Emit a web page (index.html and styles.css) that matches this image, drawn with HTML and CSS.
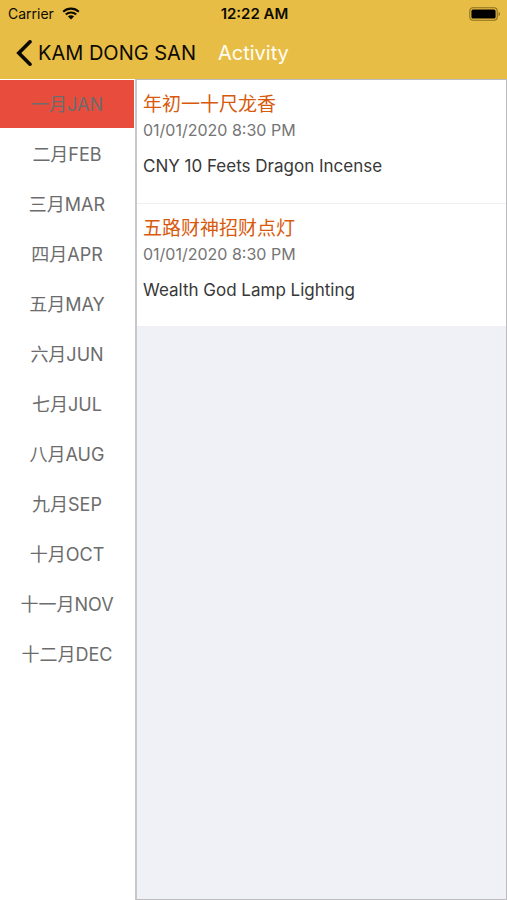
FILE: index.html
```html
<!DOCTYPE html>
<html lang="zh-Hans">
<head>
<meta charset="utf-8">
<meta name="viewport" content="width=device-width, initial-scale=1">
<title>Activity</title>
<link rel="stylesheet" href="styles.css">
</head>
<body>
<header class="top">
  <div class="status">
    <div class="carrier">
      <span>Carrier</span>
      <svg class="wifi" viewBox="0 0 18 13" aria-hidden="true">
        <path d="M1.2 4.8a11.2 11.2 0 0 1 15.6 0M3.8 7.6a7.5 7.5 0 0 1 10.4 0" fill="none" stroke="#0d0a02" stroke-width="2.1"/>
        <path d="M9 12.6 5.9 9.6a4.4 4.4 0 0 1 6.2 0z" fill="#0d0a02"/>
      </svg>
    </div>
    <time class="clock">12:22 AM</time>
    <svg class="battery" viewBox="0 0 32 14" aria-hidden="true">
      <rect x="0.8" y="0.8" width="27.4" height="12.4" rx="3.2" fill="none" stroke="#8a6d20" stroke-width="1.1"/>
      <rect x="2.4" y="2.4" width="24.2" height="9.2" rx="1.6" fill="#000"/>
      <path d="M29.6 4.8c1.9.8 1.9 3.6 0 4.4z" fill="#8a6d20"/>
    </svg>
  </div>
  <nav class="bar">
    <a class="back" href="#">
      <svg class="chevron" viewBox="0 0 16 26" aria-hidden="true">
        <path d="M14 1.8 2.8 13 14 24.2" fill="none" stroke="#0d0a02" stroke-width="3.6" stroke-linecap="round" stroke-linejoin="miter"/>
      </svg>
      <span>KAM DONG SAN</span>
    </a>
    <h1 class="title">Activity</h1>
  </nav>
</header>
<main class="content">
  <nav class="months" aria-label="Months">
    <a class="month current" href="#">一月JAN</a>
    <a class="month" href="#">二月FEB</a>
    <a class="month" href="#">三月MAR</a>
    <a class="month" href="#">四月APR</a>
    <a class="month" href="#">五月MAY</a>
    <a class="month" href="#">六月JUN</a>
    <a class="month" href="#">七月JUL</a>
    <a class="month" href="#">八月AUG</a>
    <a class="month" href="#">九月SEP</a>
    <a class="month" href="#">十月OCT</a>
    <a class="month" href="#">十一月NOV</a>
    <a class="month" href="#">十二月DEC</a>
  </nav>
  <section class="events">
    <article class="event">
      <h2 class="name">年初一十尺龙香</h2>
      <time class="date">01/01/2020 8:30 PM</time>
      <p class="text">CNY 10 Feets Dragon Incense</p>
    </article>
    <article class="event">
      <h2 class="name">五路财神招财点灯</h2>
      <time class="date">01/01/2020 8:30 PM</time>
      <p class="text">Wealth God Lamp Lighting</p>
    </article>
  </section>
</main>
</body>
</html>
```
FILE: styles.css
```css
* {
  box-sizing: border-box;
}

body {
  margin: 0;
  min-height: 100vh;
  display: flex;
  flex-direction: column;
  background: #fff;
  font-family: Inter, "Noto Sans CJK SC", sans-serif;
}

a {
  color: inherit;
  text-decoration: none;
}

.top {
  background: #e8bd45;
  color: #0d0a02;
}

.status {
  display: grid;
  grid-template-columns: 1fr auto 1fr;
  align-items: center;
  height: 27px;
  padding: 0 6px 0 8px;
}

.carrier {
  display: flex;
  align-items: center;
  gap: 8px;
  font-size: 14px;
}

.wifi {
  width: 18px;
  height: 13px;
}

.clock {
  font-size: 15px;
  font-weight: 600;
}

.battery {
  width: 32px;
  height: 14px;
  justify-self: end;
}

.bar {
  display: flex;
  align-items: center;
  gap: 22px;
  height: 52px;
  padding: 0 16px;
}

.back {
  display: flex;
  align-items: center;
  gap: 6px;
  font-size: 20px;
}

.chevron {
  width: 16px;
  height: 26px;
}

.title {
  margin: 0;
  font-size: 20px;
  font-weight: 400;
  color: #fffdf5;
}

.content {
  flex: 1;
  display: grid;
  grid-template-columns: 134px 1fr;
  gap: 1px;
}

.months {
  display: flex;
  flex-direction: column;
  gap: 2px;
  padding-top: 1px;
}

.month {
  height: 48px;
  line-height: 50px;
  text-align: center;
  font-size: 18px;
  color: #6c6c6c;
}

.current {
  background: #e84c3d;
}

.events {
  border: 1px solid #bcbcbe;
  border-left-color: #c8c8ca;
  border-left-width: 2px;
  background: #eff1f6;
}

.event {
  height: 123px;
  padding: 12px 6px;
  background: #fff;
}

.event + .event {
  border-top: 1px solid #eee;
}

.name {
  margin: 0;
  font-size: 19px;
  line-height: 25px;
  font-weight: 400;
  color: #d75a0c;
}

.date {
  display: block;
  font-size: 16px;
  line-height: 26px;
  color: #757575;
}

.text {
  margin: 10px 0 0;
  font-size: 17px;
  line-height: 26px;
  color: #383838;
}
```
